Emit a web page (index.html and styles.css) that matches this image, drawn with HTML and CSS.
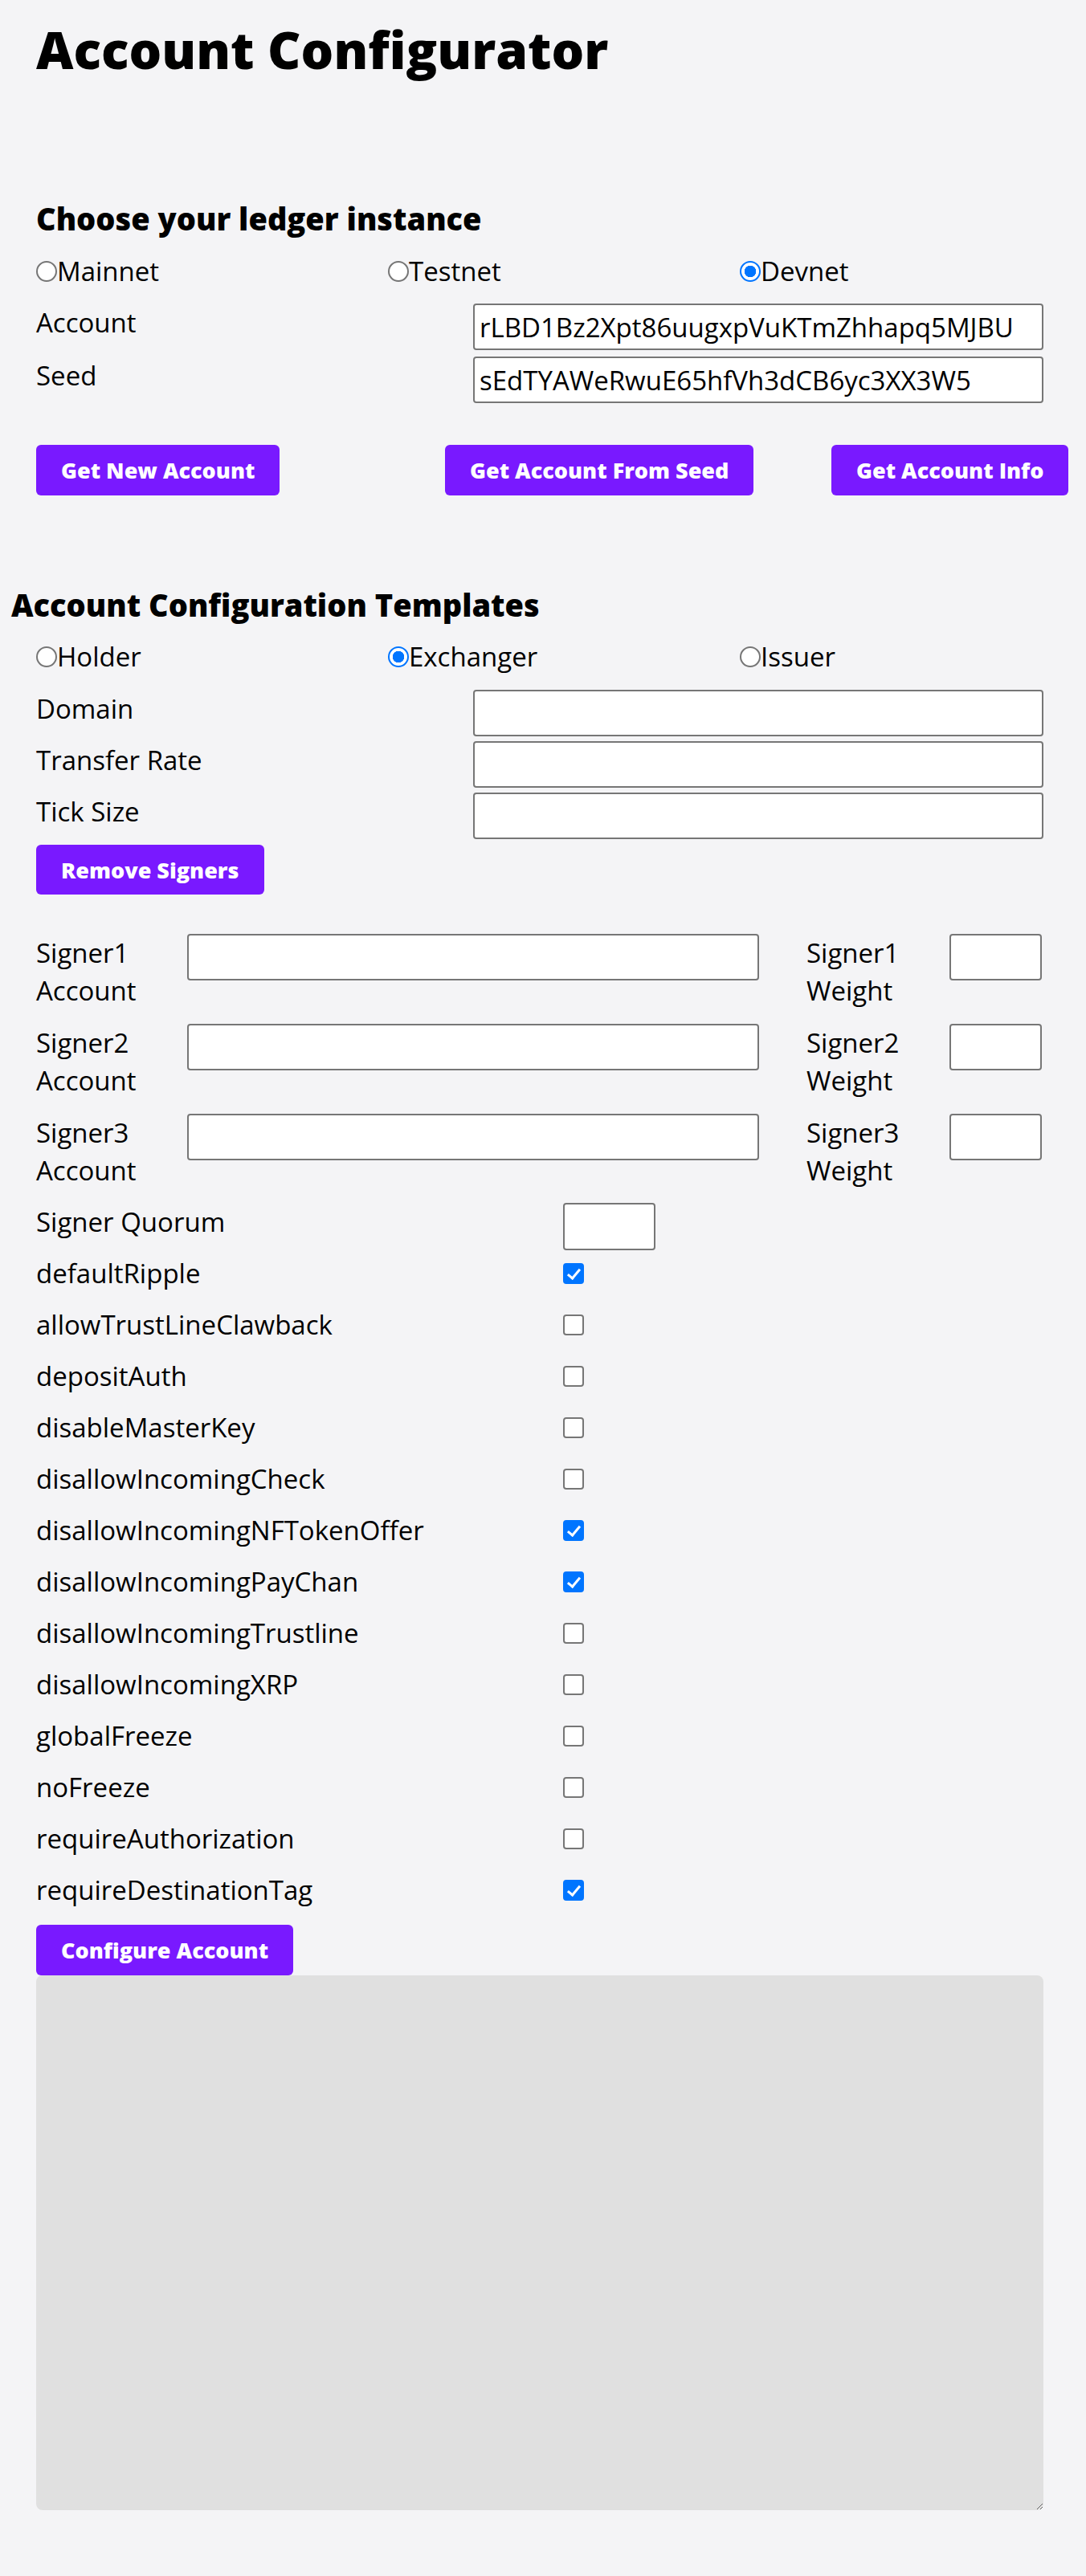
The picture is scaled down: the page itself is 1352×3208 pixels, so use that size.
FILE: index.html
```html
<!DOCTYPE html>
<html lang="en">
<head>
<meta charset="utf-8">
<title>Account Configurator</title>
<link rel="stylesheet" href="styles.css">
</head>
<body>
<main class="page">
  <h1 class="title">Account Configurator</h1>

  <section class="ledger">
    <h2 class="section-title">Choose your ledger instance</h2>
    <div class="radio-row">
      <label class="radio"><input class="radio-input" type="radio" name="ledger">Mainnet</label>
      <label class="radio"><input class="radio-input" type="radio" name="ledger">Testnet</label>
      <label class="radio"><input class="radio-input" type="radio" name="ledger" checked>Devnet</label>
    </div>
    <div class="field-grid field-grid--account">
      <label class="field-label">Account</label>
      <input class="text-input" type="text" value="rLBD1Bz2Xpt86uugxpVuKTmZhhapq5MJBU">
      <label class="field-label">Seed</label>
      <input class="text-input" type="text" value="sEdTYAWeRwuE65hfVh3dCB6yc3XX3W5">
    </div>
    <div class="button-row">
      <button class="btn" type="button">Get New Account</button>
      <button class="btn" type="button">Get Account From Seed</button>
      <button class="btn" type="button">Get Account Info</button>
    </div>
  </section>

  <section class="templates">
    <h2 class="section-title section-title--outdent">Account Configuration Templates</h2>
    <div class="radio-row radio-row--templates">
      <label class="radio"><input class="radio-input" type="radio" name="template">Holder</label>
      <label class="radio"><input class="radio-input" type="radio" name="template" checked>Exchanger</label>
      <label class="radio"><input class="radio-input" type="radio" name="template">Issuer</label>
    </div>
    <div class="field-grid field-grid--settings">
      <label class="field-label">Domain</label>
      <input class="text-input" type="text">
      <label class="field-label">Transfer Rate</label>
      <input class="text-input" type="text">
      <label class="field-label">Tick Size</label>
      <input class="text-input" type="text">
    </div>
    <button class="btn btn--remove" type="button">Remove Signers</button>

    <div class="signer-grid">
      <label class="signer-label">Signer1 Account</label>
      <input class="text-input" type="text">
      <span></span>
      <label class="signer-label">Signer1 Weight</label>
      <input class="text-input" type="text">

      <label class="signer-label">Signer2 Account</label>
      <input class="text-input" type="text">
      <span></span>
      <label class="signer-label">Signer2 Weight</label>
      <input class="text-input" type="text">

      <label class="signer-label">Signer3 Account</label>
      <input class="text-input" type="text">
      <span></span>
      <label class="signer-label">Signer3 Weight</label>
      <input class="text-input" type="text">
    </div>

    <div class="quorum-row">
      <label class="field-label">Signer Quorum</label>
      <input class="text-input text-input--small" type="text">
    </div>

    <div class="flags">
      <label class="field-label flag-label">defaultRipple</label><input class="check" type="checkbox" checked>
      <label class="field-label flag-label">allowTrustLineClawback</label><input class="check" type="checkbox">
      <label class="field-label flag-label">depositAuth</label><input class="check" type="checkbox">
      <label class="field-label flag-label">disableMasterKey</label><input class="check" type="checkbox">
      <label class="field-label flag-label">disallowIncomingCheck</label><input class="check" type="checkbox">
      <label class="field-label flag-label">disallowIncomingNFTokenOffer</label><input class="check" type="checkbox" checked>
      <label class="field-label flag-label">disallowIncomingPayChan</label><input class="check" type="checkbox" checked>
      <label class="field-label flag-label">disallowIncomingTrustline</label><input class="check" type="checkbox">
      <label class="field-label flag-label">disallowIncomingXRP</label><input class="check" type="checkbox">
      <label class="field-label flag-label">globalFreeze</label><input class="check" type="checkbox">
      <label class="field-label flag-label">noFreeze</label><input class="check" type="checkbox">
      <label class="field-label flag-label">requireAuthorization</label><input class="check" type="checkbox">
      <label class="field-label flag-label">requireDestinationTag</label><input class="check" type="checkbox" checked>
    </div>

    <button class="btn btn--configure" type="button">Configure Account</button>
    <textarea class="results"></textarea>
  </section>
</main>
</body>
</html>
```

FILE: styles.css
```css
html {
  background: #f4f4f6;
}

body {
  margin: 0;
  font-family: "Open Sans", "Noto Sans", sans-serif;
  font-size: 33px;
  line-height: 48px;
  color: #000;
}

.page {
  padding: 0 0 85px 45px;
}

.title {
  margin: 24px 0 0;
  font-size: 64px;
  line-height: 76px;
  font-weight: 800;
}

.section-title {
  margin: 149px 0 0;
  font-size: 38px;
  line-height: 46px;
  font-weight: 800;
}

.section-title--outdent {
  margin: 113px 0 0 -31px;
}

.radio-row {
  display: grid;
  grid-template-columns: 438px 438px 438px;
  margin-top: 19px;
}

.radio-row--templates {
  margin-top: 18px;
}

.radio {
  display: flex;
  align-items: center;
}

.radio-input {
  appearance: none;
  -webkit-appearance: none;
  box-sizing: border-box;
  flex: none;
  width: 26px;
  height: 26px;
  margin: 0;
  border: 2px solid #767676;
  border-radius: 50%;
  background: #fff;
}

.radio-input:checked {
  border-color: #0075ff;
  background: radial-gradient(circle, #0075ff 0 7px, #fff 7.5px);
}

.field-grid {
  display: grid;
  grid-template-columns: 544px 710px;
  align-items: start;
  margin-top: 16px;
  row-gap: 8px;
}

.field-grid--settings {
  margin-top: 17px;
  row-gap: 6px;
}

.field-label {
  line-height: 48px;
  white-space: nowrap;
}

.flag-label {
  margin-top: 3px;
}

.text-input {
  box-sizing: border-box;
  height: 58px;
  width: 100%;
  margin: 0;
  padding: 0 6px;
  border: 2px solid #767676;
  border-radius: 4px;
  background: #fff;
  font-family: "Open Sans", "Noto Sans", sans-serif;
  font-size: 33px;
  color: #000;
}

.button-row {
  display: grid;
  grid-template-columns: 509px 481px auto;
  justify-items: start;
  margin-top: 52px;
}

.btn {
  height: 63px;
  padding: 0 31px;
  border: none;
  border-radius: 6px;
  background: #7919ff;
  color: #fff;
  font-family: "Open Sans", "Noto Sans", sans-serif;
  font-size: 27px;
  font-weight: 800;
  white-space: nowrap;
}

.btn--remove {
  display: block;
  margin-top: 7px;
  height: 62px;
}

.signer-grid {
  display: grid;
  grid-template-columns: 188px 712px 59px 178px 115px;
  align-items: start;
  row-gap: 18px;
  margin-top: 49px;
}

.signer-label {
  line-height: 47px;
}

.quorum-row {
  display: grid;
  grid-template-columns: 656px 115px;
  align-items: start;
  margin-top: 17px;
}

.text-input--small {
  height: 59px;
}

.flags {
  display: grid;
  grid-template-columns: 656px auto;
  grid-auto-rows: 64px;
  align-items: start;
  justify-items: start;
  margin-top: 2px;
}

.check {
  appearance: none;
  -webkit-appearance: none;
  position: relative;
  box-sizing: border-box;
  width: 26px;
  height: 26px;
  margin: 14px 0 0;
  border: 2px solid #767676;
  border-radius: 4px;
  background: #fff;
}

.check:checked {
  border-color: #0075ff;
  background: #0075ff;
}

.check:checked::after {
  content: "";
  position: absolute;
  left: 7px;
  top: 2px;
  width: 6px;
  height: 13px;
  border: solid #fff;
  border-width: 0 3px 3px 0;
  transform: rotate(40deg);
}

.btn--configure {
  display: block;
  margin-top: 6px;
}

.results {
  display: block;
  box-sizing: border-box;
  width: 1254px;
  height: 666px;
  margin: 0;
  border: none;
  border-radius: 8px;
  background: #e0e0e0;
}
```
